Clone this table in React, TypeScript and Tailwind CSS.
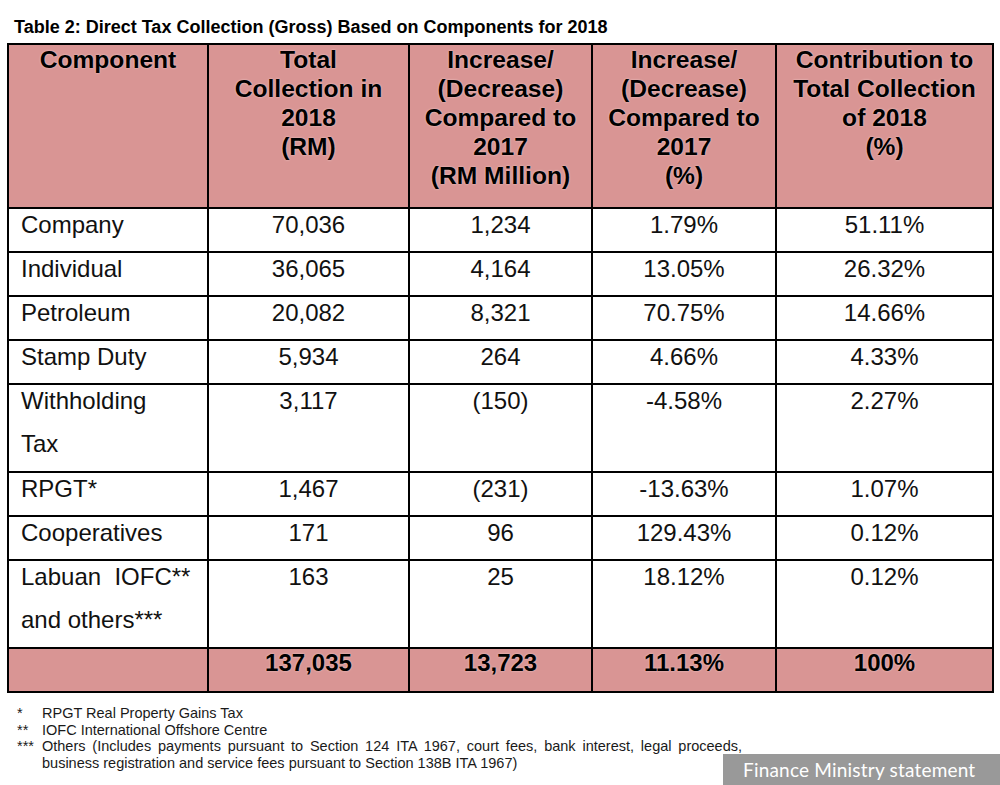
import React from "react";

type Row = { label: string[]; vals: string[]; h: string };

const rows: Row[] = [
  { label: ["Company"], vals: ["70,036", "1,234", "1.79%", "51.11%"], h: "h-[42px]" },
  { label: ["Individual"], vals: ["36,065", "4,164", "13.05%", "26.32%"], h: "h-[42px]" },
  { label: ["Petroleum"], vals: ["20,082", "8,321", "70.75%", "14.66%"], h: "h-[42px]" },
  { label: ["Stamp Duty"], vals: ["5,934", "264", "4.66%", "4.33%"], h: "h-[42px]" },
  { label: ["Withholding", "Tax"], vals: ["3,117", "(150)", "-4.58%", "2.27%"], h: "h-[86px]" },
  { label: ["RPGT*"], vals: ["1,467", "(231)", "-13.63%", "1.07%"], h: "h-[42px]" },
  { label: ["Cooperatives"], vals: ["171", "96", "129.43%", "0.12%"], h: "h-[42px]" },
  { label: ["Labuan\u00a0 IOFC**", "and others***"], vals: ["163", "25", "18.12%", "0.12%"], h: "h-[86px]" },
];

const headers: string[][] = [
  ["Component"],
  ["Total", "Collection in", "2018", "(RM)"],
  ["Increase/", "(Decrease)", "Compared to", "2017", "(RM Million)"],
  ["Increase/", "(Decrease)", "Compared to", "2017", "(%)"],
  ["Contribution to", "Total Collection", "of 2018", "(%)"],
];

const totals = ["137,035", "13,723", "11.13%", "100%"];

export default function App() {
  return (
    <div className="relative w-[1000px] h-[785px] bg-white overflow-hidden font-['Liberation_Sans',Arial,sans-serif] text-[#111]">
      <div className="pt-[17px] pl-[14px] text-[18px] leading-[20px] font-bold text-black">
        Table 2: Direct Tax Collection (Gross) Based on Components for 2018
      </div>
      <div className="mt-[6px] ml-[7px] w-[987px] bg-black p-[2px] grid grid-cols-[198px_199px_181px_182px_215px] gap-[2px]">
        {headers.map((lines, i) => (
          <div
            key={"h" + i}
            className="h-[162px] bg-[#d99594] text-center text-[24.6px] leading-[29px] font-bold text-black [text-shadow:0_0_2px_#f3d6d5]"
          >
            {lines.map((l, j) => (
              <div key={j}>{l}</div>
            ))}
          </div>
        ))}
        {rows.map((r, ri) => (
          <React.Fragment key={"r" + ri}>
            <div className={`${r.h} bg-white pl-[12px] text-[24px] leading-[32px] flex flex-col gap-[11px]`}>
              {r.label.map((l, j) => (
                <div key={j} className="whitespace-pre">{l}</div>
              ))}
            </div>
            {r.vals.map((v, vi) => (
              <div key={vi} className={`${r.h} bg-white text-center text-[24px] leading-[32px]`}>
                {v}
              </div>
            ))}
          </React.Fragment>
        ))}
        <div className="h-[42px] bg-[#d99594]" />
        {totals.map((t, i) => (
          <div
            key={"t" + i}
            className="h-[42px] bg-[#d99594] text-center text-[24px] leading-[27px] font-bold text-black [text-shadow:0_0_2px_#f3d6d5]"
          >
            {t}
          </div>
        ))}
      </div>
      <div className="mt-[12px] pl-[17px] text-[14.5px] leading-[16.5px] text-[#1a1a1a]">
        <div className="flex">
          <div className="w-[25px]">*</div>
          <div>RPGT Real Property Gains Tax</div>
        </div>
        <div className="flex">
          <div className="w-[25px]">**</div>
          <div>IOFC International Offshore Centre</div>
        </div>
        <div className="flex">
          <div className="w-[25px] shrink-0">***</div>
          <div className="w-[700px]">
            <div className="text-justify [text-align-last:justify]">
              Others (Includes payments pursuant to Section 124 ITA 1967, court fees, bank interest, legal proceeds,
            </div>
            <div>business registration and service fees pursuant to Section 138B ITA 1967)</div>
          </div>
        </div>
      </div>
      <div className="absolute right-0 bottom-0 w-[277px] h-[31px] bg-[#999999] text-white text-[19px] leading-[31px] pl-[20px] font-['Lato','Open_Sans',sans-serif] tracking-[0.2px]">
        Finance Ministry statement
      </div>
    </div>
  );
}
